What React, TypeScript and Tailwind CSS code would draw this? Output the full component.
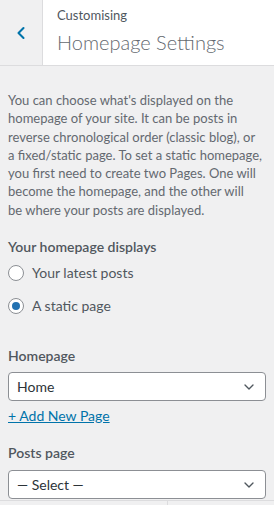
import { ChevronLeft, ChevronDown } from "lucide-react";

const font = { fontFamily: 'Lato, "Noto Sans", sans-serif' };

function Select({ value }: { value: string }) {
  return (
    <div className="flex h-[29px] items-center justify-between rounded-[4px] border border-[#8c8f94] bg-white pl-[8px] pr-[8px] text-[14px] text-[#2c3338]">
      <span>{value}</span>
      <ChevronDown className="h-[16px] w-[16px] text-[#50575e]" strokeWidth={2} />
    </div>
  );
}

export default function App() {
  return (
    <div className="flex h-[505px] w-[274px] flex-col overflow-hidden bg-[#f0f0f1]" style={font}>
      {/* Header */}
      <div className="flex h-[66px] shrink-0 border-b border-[#dcdcde] bg-white">
        <button className="flex w-[43px] items-center justify-center border-r border-[#dcdcde] bg-[#f0f0f1] text-[#0073aa]">
          <ChevronLeft className="h-[20px] w-[20px]" strokeWidth={2.5} />
        </button>
        <div className="flex flex-col pl-[14px] pt-[6px]">
          <span className="text-[13px] leading-[18px] text-[#50575e]">Customising</span>
          <span className="mt-[5px] text-[20px] font-light leading-[26px] text-[#646970]">Homepage Settings</span>
        </div>
      </div>

      {/* Body */}
      <div className="flex flex-col px-[8px] pt-[25px]">
        <p className="text-[13px] leading-[18.3px] text-[#646970]">
          You can choose what's displayed on the<br />
          homepage of your site. It can be posts in<br />
          reverse chronological order (classic blog), or<br />
          a fixed/static page. To set a static homepage,<br />
          you first need to create two Pages. One will<br />
          become the homepage, and the other will<br />
          be where your posts are displayed.
        </p>

        <div className="mt-[18px] text-[14px] font-semibold leading-[20px] text-[#50575e]">Your homepage displays</div>

        <label className="mt-[6px] flex items-center gap-[8px] text-[14px] leading-[20px] text-[#50575e]">
          <span className="h-[16px] w-[16px] rounded-full border border-[#8c8f94] bg-white" />
          Your latest posts
        </label>
        <label className="mt-[13px] flex items-center gap-[8px] text-[14px] leading-[20px] text-[#50575e]">
          <span className="flex h-[16px] w-[16px] items-center justify-center rounded-full border border-[#8c8f94] bg-white">
            <span className="h-[8px] w-[8px] rounded-full bg-[#2271b1]" />
          </span>
          A static page
        </label>

        <div className="mt-[30px] text-[14px] font-semibold leading-[20px] text-[#50575e]">Homepage</div>
        <div className="mt-[6px]">
          <Select value="Home" />
        </div>
        <a className="mt-[4px] self-start text-[14px] leading-[22px] text-[#0073aa] underline">+ Add New Page</a>

        <div className="mt-[16px] text-[14px] font-semibold leading-[20px] text-[#50575e]">Posts page</div>
        <div className="mt-[7px]">
          <Select value="— Select —" />
        </div>
      </div>

      {/* Footer edge */}
      <div className="mt-auto flex h-[5px] shrink-0 border-t border-[#dcdcde]">
        <div className="w-[168px] border-r border-[#dcdcde]" />
      </div>
    </div>
  );
}
